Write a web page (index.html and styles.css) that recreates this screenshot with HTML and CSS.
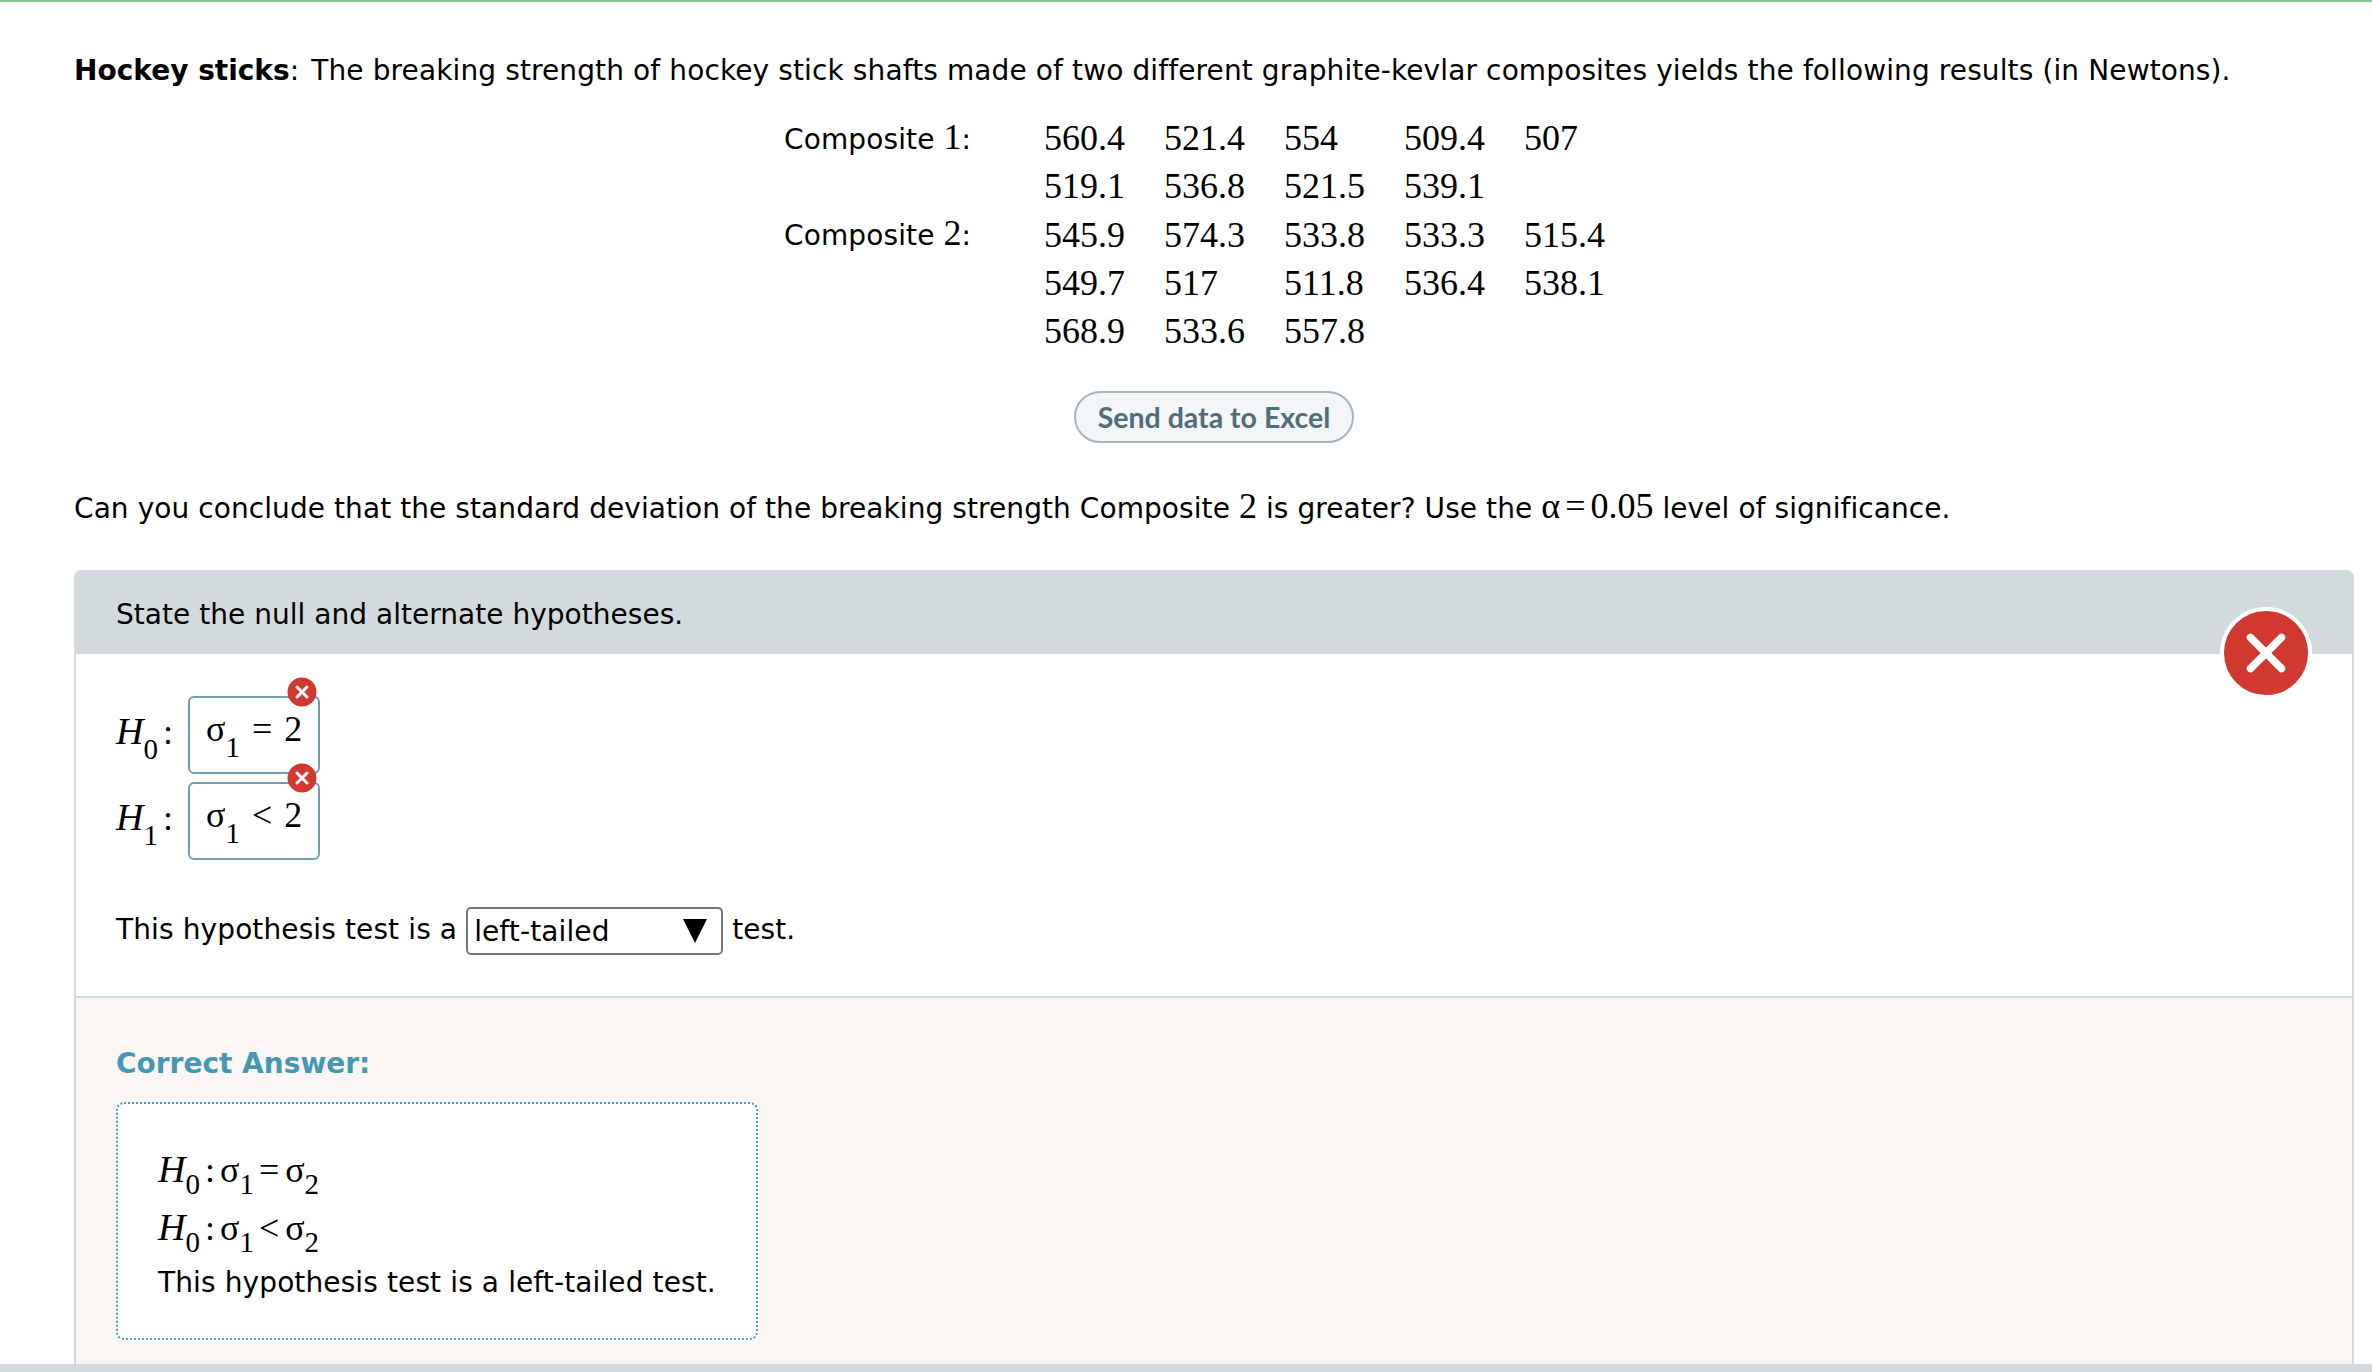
FILE: index.html
```html
<!DOCTYPE html>
<html lang="en">
<head>
<meta charset="utf-8">
<title>Hockey sticks</title>
<link rel="stylesheet" href="styles.css">
</head>
<body>
<main class="page">
  <div class="question">
    <p class="intro"><b class="lead">Hockey sticks</b><span class="lead-colon">:</span> The breaking strength of hockey stick shafts made of two different graphite-kevlar composites yields the following results (in Newtons).</p>
    <div class="data">
      <div class="data-label">Composite <span class="num">1</span>:</div>
      <div class="val">560.4</div><div class="val">521.4</div><div class="val">554</div><div class="val">509.4</div><div class="val">507</div>
      <div class="data-label"></div>
      <div class="val">519.1</div><div class="val">536.8</div><div class="val">521.5</div><div class="val">539.1</div><div class="val"></div>
      <div class="data-label">Composite <span class="num">2</span>:</div>
      <div class="val">545.9</div><div class="val">574.3</div><div class="val">533.8</div><div class="val">533.3</div><div class="val">515.4</div>
      <div class="data-label"></div>
      <div class="val">549.7</div><div class="val">517</div><div class="val">511.8</div><div class="val">536.4</div><div class="val">538.1</div>
      <div class="data-label"></div>
      <div class="val">568.9</div><div class="val">533.6</div><div class="val">557.8</div><div class="val"></div><div class="val"></div>
    </div>
    <div class="btn-row"><button class="excel-btn">Send data to Excel</button></div>
    <p class="ask">Can you conclude that the standard deviation of the breaking strength Composite <span class="num">2</span> is greater? Use the <span class="num">α</span><span class="num eq">=</span><span class="num">0.05</span> level of significance.</p>
  </div>

  <section class="panel">
    <header class="panel-head">State the null and alternate hypotheses.</header>
    <div class="panel-body">
      <div class="hypo">
        <div class="hypo-label"><i>H</i><sub>0</sub><span class="colon">:</span></div>
        <div class="box"><span class="sigma">σ</span><sub>1</sub><span class="op">=</span><span>2</span>
          <svg class="badge" viewBox="0 0 30 30"><circle cx="15" cy="15" r="14.5" fill="#d13830"/><path d="M10 10 20 20M20 10 10 20" stroke="#fff" stroke-width="3" stroke-linecap="round"/></svg>
        </div>
      </div>
      <div class="hypo hypo-second">
        <div class="hypo-label"><i>H</i><sub>1</sub><span class="colon">:</span></div>
        <div class="box"><span class="sigma">σ</span><sub>1</sub><span class="op">&lt;</span><span>2</span>
          <svg class="badge" viewBox="0 0 30 30"><circle cx="15" cy="15" r="14.5" fill="#d13830"/><path d="M10 10 20 20M20 10 10 20" stroke="#fff" stroke-width="3" stroke-linecap="round"/></svg>
        </div>
      </div>
      <div class="test-line">
        <span>This hypothesis test is a</span>
        <div class="select"><span class="select-text">left-tailed</span><svg class="select-arrow" viewBox="0 0 24 24"><path d="M0 0H24L12 24Z" fill="#000"/></svg></div>
        <span>test.</span>
      </div>
    </div>
    <div class="answer">
      <div class="answer-title">Correct Answer:</div>
      <div class="answer-box">
        <div class="ans-math"><i>H</i><sub>0</sub><span class="colon-a">:</span><span>σ</span><sub>1</sub><span class="op-a">=</span><span>σ</span><sub>2</sub></div>
        <div class="ans-math"><i>H</i><sub>0</sub><span class="colon-a">:</span><span>σ</span><sub>1</sub><span class="op-a">&lt;</span><span>σ</span><sub>2</sub></div>
        <div class="ans-text">This hypothesis test is a left-tailed test.</div>
      </div>
    </div>
    <svg class="big-x" viewBox="0 0 92 92"><circle cx="46" cy="46" r="44" fill="#d13830" stroke="#fff" stroke-width="4"/><path d="M30.5 30.5 61.5 61.5M61.5 30.5 30.5 61.5" stroke="#fff" stroke-width="7.5" stroke-linecap="round"/></svg>
  </section>
</main>
<div class="bottom-bar"></div>
</body>
</html>
```
FILE: styles.css
```css
* { box-sizing: border-box; }
html, body { margin: 0; height: 1372px; overflow: hidden; background: #fff; }
body {
  font-family: "DejaVu Sans", sans-serif;
  font-size: 28px;
  letter-spacing: .115px;
  color: #000;
  position: relative;
}
.page { border-top: 2px solid #84c69b; padding: 0 18px 0 74px; height: 1364px; overflow: hidden; }
.question { height: 568px; padding-top: 51px; }
.intro { margin: 0; line-height: 36px; white-space: nowrap; }
.lead { letter-spacing: 0; }
.lead-colon { margin-right: 3px; }
.num { font-family: "Liberation Serif", serif; font-size: 36px; letter-spacing: 0; }
.eq { margin: 0 5px; }
.data {
  display: grid;
  grid-template-columns: 260px repeat(5, 120px);
  grid-auto-rows: 48.3px;
  margin: 25px 0 0 710px;
  align-items: center;
}
.data-label { line-height: 48px; white-space: nowrap; }
.val { font-family: "Liberation Serif", serif; font-size: 36px; line-height: 48px; letter-spacing: 0; }
.btn-row { margin: 36px 0 0 1000px; }
.excel-btn {
  width: 280px; height: 52px;
  border: 2px solid #a3b6bf; border-radius: 26px;
  background: #f3f5f6; color: #4f6d7a;
  font-family: "Lato", sans-serif; font-weight: 700; font-size: 28.5px;
  padding: 0;
}
.ask { margin: 41px 0 0; line-height: 44px; white-space: nowrap; letter-spacing: .075px; }
.panel { position: relative; height: 794px; border: 2px solid #d3dadd; border-top: 0; border-bottom: 0; border-radius: 8px 8px 0 0; }
.panel-head {
  margin: 0 -2px; height: 84px; background: #d3dadd; border-radius: 8px 8px 0 0;
  padding: 6px 0 0 42px; line-height: 78px; letter-spacing: .03px;
}
.panel-body { height: 344px; padding: 42px 0 0 40px; border-bottom: 2px solid #d3dadd; }
.hypo { display: flex; align-items: center; height: 78px; font-family: "Liberation Serif", serif; font-size: 36px; letter-spacing: 0; }
.hypo-second { margin-top: 8px; }
.hypo-label { width: 72px; white-space: nowrap; position: relative; top: -4px; }
.hypo-label i { font-size: 38px; }
.hypo-label sub { vertical-align: -15px; }
.colon { margin-left: 5px; }
sub { font-size: 29px; line-height: 0; vertical-align: -12px; }
.box {
  position: relative; width: 132px; height: 78px;
  border: 2px solid #6f9fb0; border-radius: 6px;
  padding: 0 0 12px 16px; display: flex; align-items: center; white-space: nowrap; line-height: 1;
}
.box sub { position: relative; top: 18px; }
.op { margin: 0 12px 0 12px; }
.badge { position: absolute; width: 30px; height: 30px; right: 1px; top: -21px; }
.test-line { display: flex; align-items: center; margin-top: 45px; gap: 9px; height: 48px; white-space: nowrap; }
.select {
  width: 257px; height: 48px; border: 2px solid #777; border-radius: 5px;
  display: flex; align-items: center; justify-content: space-between;
  padding: 0 14px 0 6px; background: #fff;
  position: relative; top: 2px;
}
.select-text { font-size: 28px; }
.select-arrow { width: 24px; height: 24px; }
.answer { height: 368px; background: #fbf5f3; padding: 46px 0 0 40px; }
.answer-title { font-weight: 700; color: #4598b4; line-height: 40px; letter-spacing: 0; }
.answer-box {
  width: 642px; height: 238px; margin-top: 18px;
  background: #fff; border: 2px dotted #4a9db8; border-radius: 8px;
  padding: 36px 0 0 40px;
}
.ans-math { font-family: "Liberation Serif", serif; font-size: 36px; height: 58px; line-height: 58px; white-space: nowrap; letter-spacing: 0; }
.ans-math i { font-size: 38px; }
.colon-a { margin: 0 5px 0 5px; }
.op-a { margin: 0 6px 0 5px; }
.ans-text { line-height: 36px; margin-top: 9px; white-space: nowrap; }
.big-x { position: absolute; width: 92px; height: 92px; left: 2144px; top: 37px; }
.bottom-bar { height: 8px; background: #d3dadd; }
```
